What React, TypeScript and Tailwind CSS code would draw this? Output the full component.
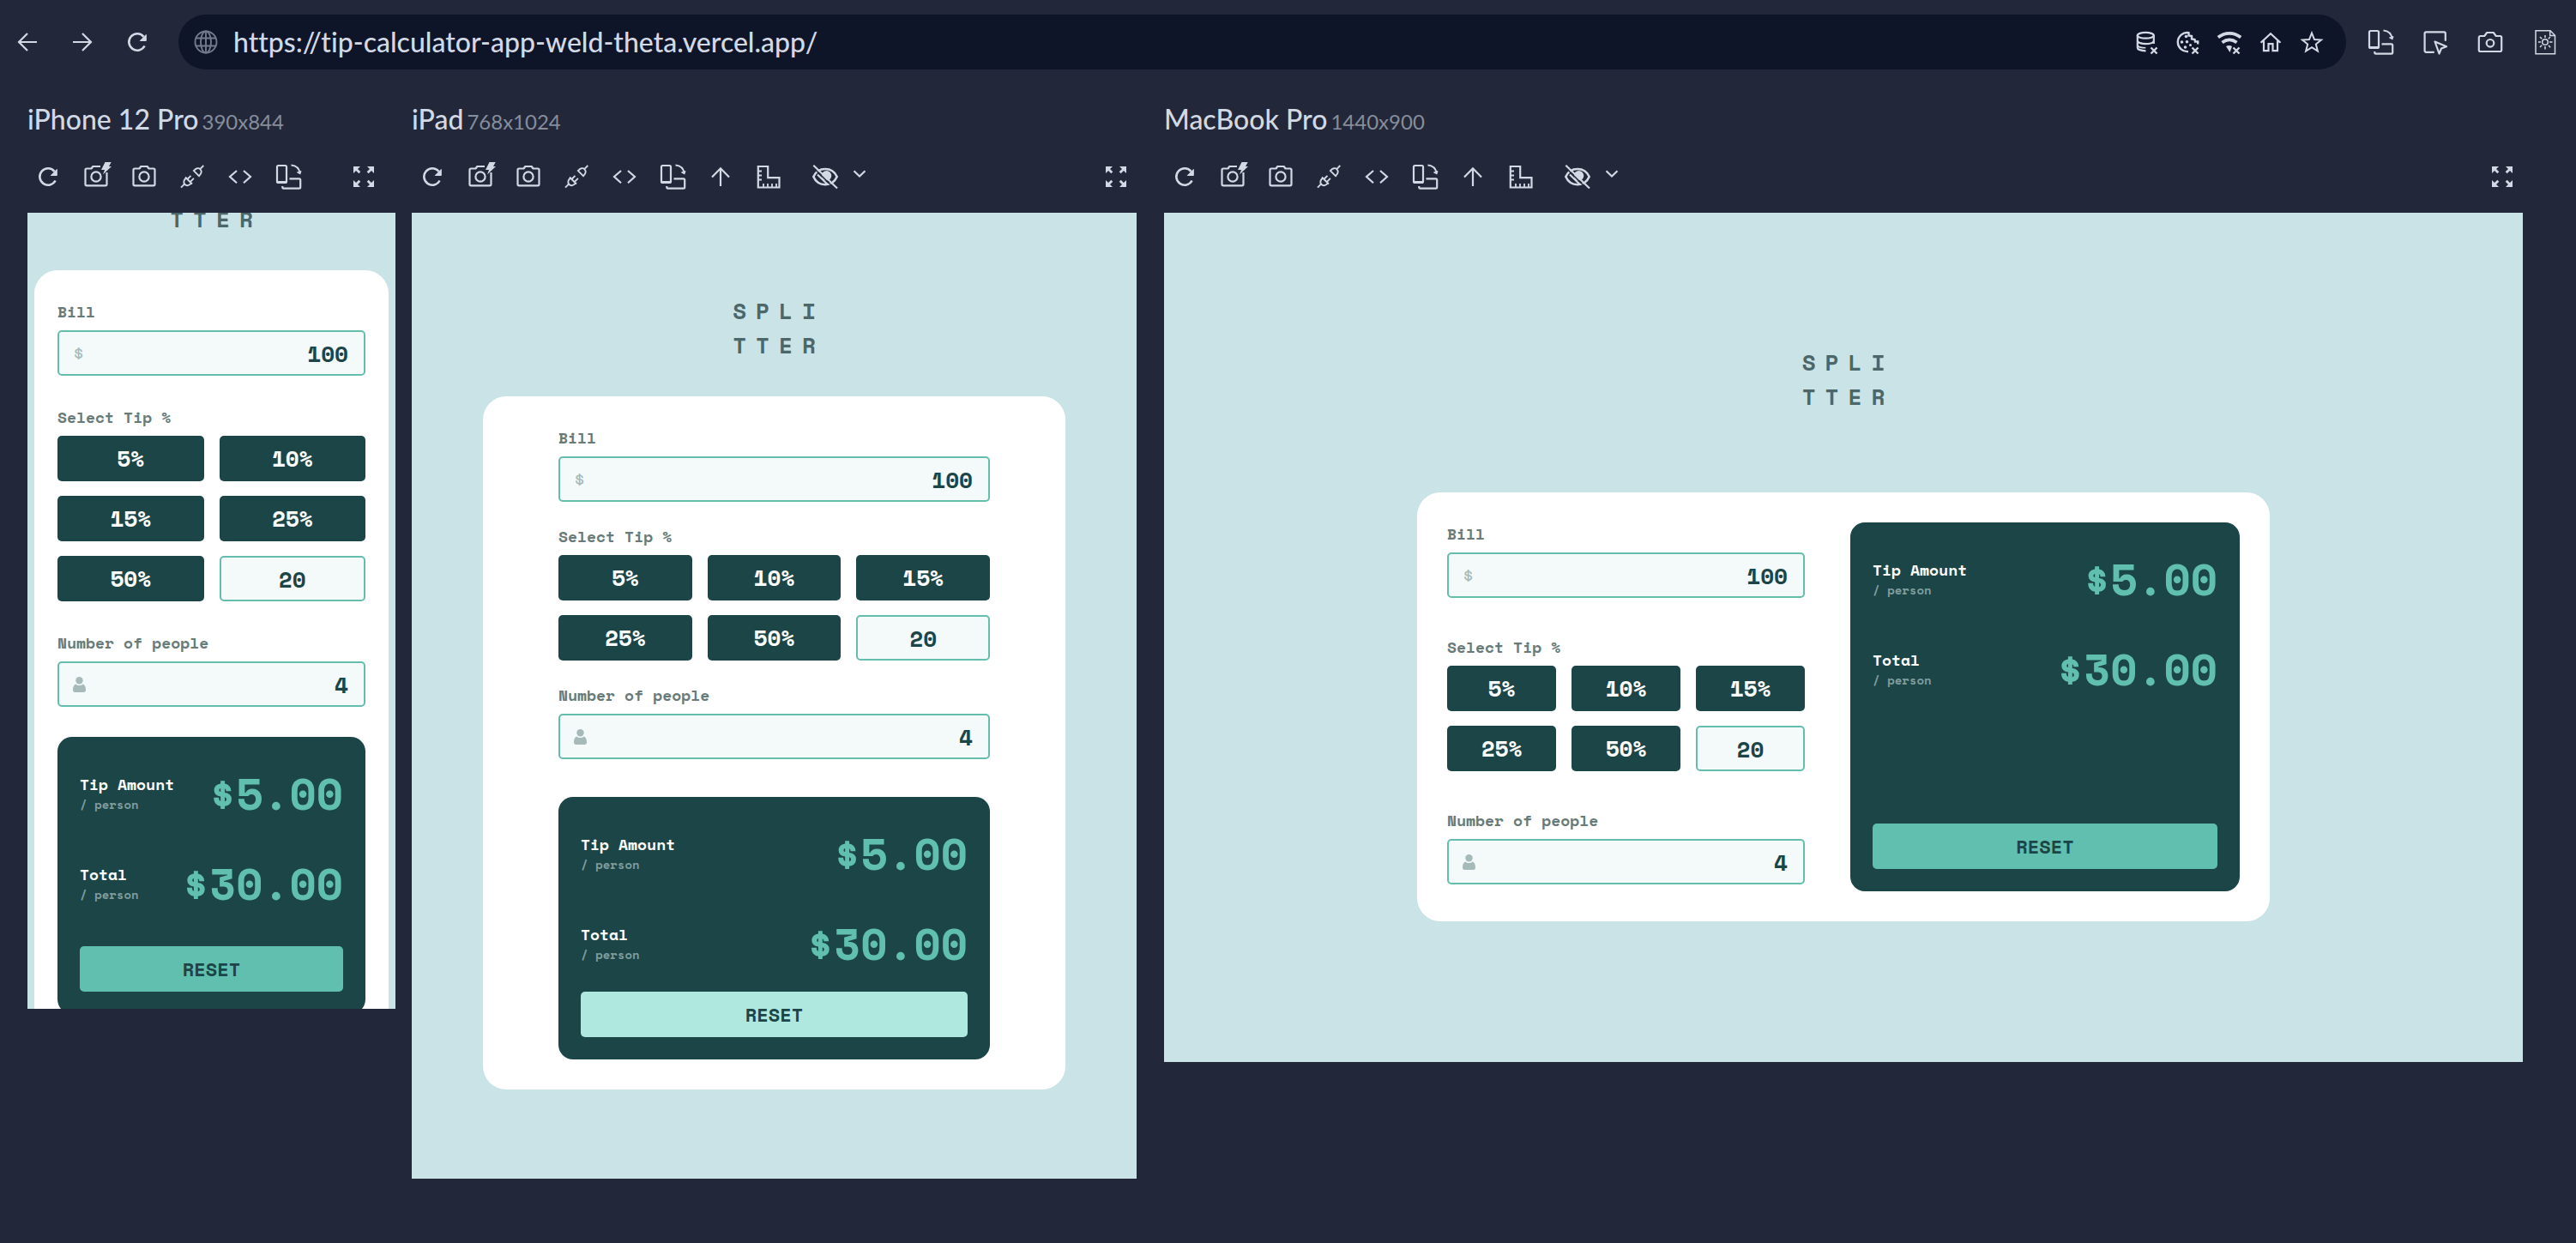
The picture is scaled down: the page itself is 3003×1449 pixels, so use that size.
import { useId, type ReactNode } from "react";

type Layout = "phone" | "tablet" | "laptop";

function Icon({ children, className = "" }: { children: ReactNode; className?: string }) {
  return (
    <svg
      aria-hidden="true"
      viewBox="0 0 32 32"
      fill="none"
      stroke="currentColor"
      strokeWidth="2.2"
      className={`size-8 shrink-0 overflow-visible ${className}`}
    >
      {children}
    </svg>
  );
}

const SmallCross = () => <path strokeWidth="2.4" d="M20.5 22.5l7 7M27.5 22.5l-7 7" />;

const icons = {
  back: <path d="M27 16H6.5M16 6L6 16l10 10" />,
  forward: <path d="M5 16h20.5M16 6l10 10-10 10" />,
  reload: (
    <>
      <path strokeWidth="2.6" d="M24.6 20.5A9.7 9.7 0 1 1 23.5 9.8" />
      <path fill="currentColor" strokeWidth="1" strokeLinejoin="round" d="M26.3 7.5v7h-7z" />
    </>
  ),
  camera: (
    <>
      <path
        strokeLinejoin="round"
        d="M5 6.500h5.500L12.300 4h7.400l1.800 2.500H27A1.500 1.500 0 0 1 28.500 8v16.800A1.500 1.500 0 0 1 27 26.300H5a1.500 1.500 0 0 1-1.500-1.500V8A1.500 1.500 0 0 1 5 6.500z"
      />
      <circle cx="16" cy="16" r="5.6" />
    </>
  ),
  cameraFlash: (
    <>
      <path
        strokeLinejoin="round"
        d="M21 4h-8.700l-1.800 2.500H5A1.500 1.500 0 0 0 3.500 8v16.800A1.500 1.500 0 0 0 5 26.300h22a1.500 1.500 0 0 0 1.500-1.500V11"
      />
      <circle cx="16" cy="16" r="5.6" />
      <path fill="currentColor" stroke="none" d="M26.500-1h7.200L31 4h3L24 13.500 26 8h-4z" />
    </>
  ),
  plug: (
    <g strokeWidth="1.9">
      <path d="M3 28.700l4-4M8 16.500l8 8M9 17.500c-3 2.500-3.500 5.500-1.500 7.500s5 1.500 7.500-1.500M10.800 18.500l3.700-3.700M14.200 21.600l3.700-3.700" />
      <path d="M29.300 3l-3.800 3.800M17.200 8.300l7.500 7.500M18 9c2.500-3 5.500-3.700 7.500-1.700s1.500 5-1.300 7.600" />
    </g>
  ),
  code: <path d="M12 9l-8 7 8 7.300M20 9l8 7-8 7.300" />,
  rotate: (
    <>
      <rect x="3" y="3" width="11" height="20" rx="1.5" />
      <path strokeWidth="3" d="M3.500 22.500h10" />
      <path d="M17.500 18.300h11.300a1.400 1.400 0 0 1 1.400 1.400v8.600a1.400 1.400 0 0 1-1.400 1.400H10.500A1.400 1.400 0 0 1 9.300 28.500V27" />
      <path strokeWidth="1.8" d="M19.500 2.500C25 3 28.800 6.500 29.600 12M26.500 10.500l3.200 1.800 1-3" />
    </>
  ),
  expand: (
    <>
      <path fill="currentColor" stroke="none" d="M4 4h8L4 12zM28 4v8l-8-8zM4 28v-8l8 8zM28 28h-8l8-8z" />
      <path strokeWidth="2.8" d="M6 6l5.300 5.300M26 6l-5.300 5.300M6 26l5.300-5.300M26 26l-5.300-5.300" />
    </>
  ),
  up: <path d="M16 27V6.500M6 16.500L16 6.300l10 10.200" />,
  ruler: (
    <>
      <path d="M3.800 4h11.400v13.200h13.300v11.300H3.800z" />
      <path d="M4 9.500h4M4 14.500h4M4 19.500h4M10 28v-4M15 28v-4M20 28v-4M25 28v-4" strokeWidth="1.8" />
    </>
  ),
  eyeOff: (
    <>
      <path strokeWidth="2.6" d="M2.300 16C5 10 10 7 16 7s11 3 13.700 9C27 22 22 25.200 16 25.200S5 22 2.300 16z" />
      <circle cx="17.5" cy="14.8" r="5.800" fill="currentColor" stroke="none" />
      <path stroke="#222839" strokeWidth="1.6" d="M6 9.300l18.500 18.200" />
      <path strokeWidth="2.2" d="M7 13.500l11.500 11.300" />
      <path d="M2.300 2.700L30 29.500" />
    </>
  ),
  database: (
    <>
      <ellipse cx="14.3" cy="8.3" rx="9.5" ry="3.4" />
      <path d="M4.800 8.300V22.500c0 2 4 3.700 9.700 3.800M23.800 8.300V18M4.800 15c1 2 5 3.200 9.500 3.200s8.500-1.200 9.500-3.200" />
      <path d="M4.800 14.500c1 2 5 3.200 9.500 3.200M4.800 20c1 1.800 4 2.800 9.500 2.800" strokeWidth="1.6" />
      <SmallCross />
    </>
  ),
  cookie: (
    <>
      <path strokeWidth="2.4" d="M16 27A11 11 0 1 1 16.500 5.200v3.300l3.500.5v3.500l3.500.5.500 2.500h3.200v3" />
      <g fill="currentColor" stroke="none">
        <circle cx="13.5" cy="9.5" r="1.8" />
        <circle cx="8.5" cy="16" r="1.8" />
        <circle cx="14.5" cy="15.8" r="1.8" />
        <circle cx="12.5" cy="22" r="1.8" />
        <circle cx="18.5" cy="19.5" r="1.5" />
      </g>
      <SmallCross />
    </>
  ),
  wifi: (
    <>
      <path strokeWidth="3.8" d="M2.800 10.500c8-6.300 18.400-6.300 26.400 0M7.500 16.500c5.500-4 11.500-4 17 0" />
      <path fill="currentColor" stroke="none" d="M12 21c2-1.300 5-1.300 7 0l-2.500 7z" />
      <SmallCross />
    </>
  ),
  home: <path d="M6.500 15.500H8v10.700h5.500v-8h5v8H24V15.500h1.500M4.500 16.800L16 6.200l11.500 10.600" />,
  star: (
    <path d="M16 5.500l3 7.500 8 .5-6.200 5.100 2.100 7.900-6.900-4.400-6.900 4.400 2.100-7.900L5 13.500l8-.5z" strokeWidth="2" />
  ),
  inspect: (
    <>
      <path strokeLinecap="round" d="M14 27.800H5.300A1.700 1.700 0 0 1 3.600 26V6a1.700 1.700 0 0 1 1.700-1.700h20.800A1.700 1.700 0 0 1 27.800 6v8" />
      <path strokeLinejoin="round" d="M15.500 15.500L29 21.200l-6 2.300-2.500 6z" />
    </>
  ),
  snapshot: (
    <>
      <path
        strokeLinejoin="round"
        d="M4.500 9h4.700l3-4h7.600l3 4h4.700A1.700 1.700 0 0 1 29.200 10.700v14.600a1.700 1.700 0 0 1-1.700 1.700h-23a1.700 1.700 0 0 1-1.700-1.700V10.700A1.700 1.700 0 0 1 4.500 9z"
      />
      <circle cx="16" cy="17.3" r="4.3" />
    </>
  ),
  fileSun: (
    <g strokeWidth="1.5">
      <path d="M5 2.800h17l5.500 5.500v21.400H5zM21.700 3v5.500h5.500" />
      <circle cx="16" cy="16" r="3.3" />
      <path d="M16 8v3M16 21v3.500M8 16h3M21 16h3.500M10 10l2.200 2.200M20 20l2.200 2.200M22 10l-2.200 2.200M10 22l2.200-2.200" />
    </g>
  ),
  globe: (
    <g strokeWidth="1.9">
      <circle cx="16" cy="16" r="12.5" />
      <ellipse cx="16" cy="16" rx="6" ry="12.5" />
      <path d="M16 3.500v25M5 11.500h22M5 20.500h22" />
    </g>
  ),
};

type IconName = keyof typeof icons;

function IconButton({ icon, label }: { icon: IconName; label: string }) {
  return (
    <button type="button" aria-label={label} className="flex size-12 shrink-0 items-center justify-center">
      <Icon>{icons[icon]}</Icon>
    </button>
  );
}

function AddressBar() {
  return (
    <header className="flex items-center gap-4 pt-[17px] pr-3 pl-2">
      <IconButton icon="back" label="Back" />
      <IconButton icon="forward" label="Forward" />
      <IconButton icon="reload" label="Reload" />
      <div className="ml-2 flex h-16 min-w-0 flex-1 items-center rounded-full bg-[#0f1528] px-4">
        <Icon className="text-[#737a8b]">{icons.globe}</Icon>
        <input
          type="text"
          aria-label="Address"
          defaultValue="https://tip-calculator-app-weld-theta.vercel.app/"
          className="ml-4 min-w-0 flex-1 bg-transparent text-[32px] leading-10 outline-none"
        />
        <IconButton icon="database" label="Clear storage" />
        <IconButton icon="cookie" label="Clear cookies" />
        <IconButton icon="wifi" label="Clear network cache" />
        <IconButton icon="home" label="Set as homepage" />
        <IconButton icon="star" label="Bookmark" />
      </div>
      <IconButton icon="rotate" label="Rotate devices" />
      <IconButton icon="inspect" label="Inspect elements" />
      <IconButton icon="snapshot" label="Capture all devices" />
      <IconButton icon="fileSun" label="Color scheme" />
    </header>
  );
}

function DeviceToolbar({ full }: { full: boolean }) {
  return (
    <div className={`mt-5 flex items-center gap-2 ${full ? "" : "pr-[13px]"}`}>
      <IconButton icon="reload" label="Reload device" />
      <IconButton icon="cameraFlash" label="Quick screenshot" />
      <IconButton icon="camera" label="Full page screenshot" />
      <IconButton icon="plug" label="Disable event mirroring" />
      <IconButton icon="code" label="Open devtools" />
      <IconButton icon="rotate" label="Rotate device" />
      {full && (
        <>
          <IconButton icon="up" label="Scroll to top" />
          <IconButton icon="ruler" label="Show rulers" />
          <div className="ml-[10px] flex items-center gap-1">
            <IconButton icon="eyeOff" label="Visual impairment" />
            <button type="button" aria-label="Visual impairment options" className="flex h-12 w-6 items-center justify-center">
              <svg viewBox="0 0 24 32" fill="none" stroke="currentColor" strokeWidth="2.2" className="h-8 w-6" aria-hidden="true">
                <path d="M5.500 9.200l6.500 6.300 6.500-6.300" />
              </svg>
            </button>
          </div>
        </>
      )}
      <div className="ml-auto">
        <IconButton icon="expand" label="Fullscreen" />
      </div>
    </div>
  );
}

const fieldClass =
  "h-[53px] w-full min-w-0 rounded-[5px] border-2 border-[#65bdae] bg-[#f4f9fa] text-[26px] font-bold text-[#1c4548] outline-none";
const labelClass = "block text-[18px] leading-[27px] font-bold text-[#687b78]";

function Field({ label, value, icon }: { label: string; value: string; icon: ReactNode }) {
  const id = useId();
  return (
    <div>
      <label htmlFor={id} className={labelClass}>
        {label}
      </label>
      <div className="relative mt-2">
        <span className="pointer-events-none absolute inset-y-0 left-[18px] flex items-center text-[#a6bab9]">{icon}</span>
        <input id={id} type="text" inputMode="numeric" defaultValue={value} className={`${fieldClass} pr-[18px] pl-12 text-right`} />
      </div>
    </div>
  );
}

function PersonIcon() {
  return (
    <svg viewBox="0 0 15 18" fill="currentColor" className="h-[18px] w-[15px]" aria-hidden="true">
      <circle cx="7.5" cy="4.3" r="4.2" />
      <path d="M3.300 8.500c2.300 2 6.100 2 8.400 0 2.400 1 3.300 3.500 3.300 7 0 1.600-1 2.500-2.400 2.500H2.400C1 18 0 17.100 0 15.500c0-3.500.9-6 3.300-7z" />
    </svg>
  );
}

function Result({ label, amount }: { label: string; amount: string }) {
  return (
    <div className="flex items-center justify-between">
      <div className="font-bold">
        <div className="text-[18px] leading-[26px] text-white">{label}</div>
        <div className="text-[14px] leading-[22px] text-[#7f9c9e]">/ person</div>
      </div>
      <output className="text-[51px] leading-[79px] font-bold text-[#60bfaf]">{amount}</output>
    </div>
  );
}

const layouts: Record<Layout, { page: string; card: string; form: string; tips: string; reset: string }> = {
  phone: {
    page: "-mt-[53px] px-2",
    card: "mt-10 grid-cols-1 gap-[35px] px-[27px] py-[35px]",
    form: "gap-[35px]",
    tips: "grid-cols-2",
    reset: "mt-[34px] bg-[#60bfaf]",
  },
  tablet: {
    page: "h-full justify-center px-[83px] pb-[10px]",
    card: "mt-10 grid-cols-1 gap-11 px-[88px] py-[35px]",
    form: "gap-[27px]",
    tips: "grid-cols-3",
    reset: "mt-[17px] bg-[#aee8df]",
  },
  laptop: {
    page: "h-full justify-center pb-[10px]",
    card: "mt-[92px] max-w-[994px] grid-cols-[417fr_454fr] gap-[53px] p-[35px]",
    form: "gap-11 pb-2",
    tips: "grid-cols-3",
    reset: "mt-auto bg-[#60bfaf]",
  },
};

function TipCalculator({ layout }: { layout: Layout }) {
  const l = layouts[layout];
  return (
    <main className={`flex flex-col items-center [font-family:'Space_Mono','DejaVu_Sans_Mono',monospace] ${l.page}`}>
      <h1 className="pl-[11px] text-[26px] leading-10 font-bold tracking-[11px] text-[#4b676a]">
        SPLI
        <br />
        TTER
      </h1>
      <div className={`grid w-full rounded-[27px] bg-white ${l.card}`}>
        <form className={`flex min-w-0 flex-col ${l.form}`}>
          <Field label="Bill" value="100" icon={<span className="text-[22px]">$</span>} />
          <fieldset className="min-w-0">
            <legend className={labelClass}>Select Tip %</legend>
            <div className={`mt-2 grid gap-x-[18px] gap-y-[17px] ${l.tips}`}>
              {["5%", "10%", "15%", "25%", "50%"].map((tip) => (
                <button key={tip} type="button" className="h-[53px] rounded-[5px] bg-[#1c4548] text-[26px] font-bold text-white">
                  {tip}
                </button>
              ))}
              <input type="text" inputMode="numeric" aria-label="Custom tip" defaultValue="20" className={`${fieldClass} text-center`} />
            </div>
          </fieldset>
          <Field label="Number of people" value="4" icon={<PersonIcon />} />
        </form>
        <section aria-label="Result" className="flex min-w-0 flex-col rounded-[17px] bg-[#1c4548] p-[26px]">
          <div className="flex flex-col gap-[26px]">
            <Result label="Tip Amount" amount="$5.00" />
            <Result label="Total" amount="$30.00" />
          </div>
          <button type="button" className={`h-[53px] w-full shrink-0 rounded-[5px] text-[22px] font-bold text-[#1c4548] ${l.reset}`}>
            RESET
          </button>
        </section>
      </div>
    </main>
  );
}

function Device({ name, size, layout, column, frame }: { name: string; size: string; layout: Layout; column: string; frame: string }) {
  return (
    <section aria-label={name} className={`min-w-0 ${column}`}>
      <div className="flex items-baseline gap-1 leading-10 whitespace-nowrap">
        <h2 className="text-[32px] leading-10">{name}</h2>
        <span className="text-[24px] font-normal text-[#868d9c]">{size}</span>
      </div>
      <DeviceToolbar full={layout !== "phone"} />
      <div className={`mt-[18px] overflow-hidden bg-[#cae3e6] ${frame}`}>
        <TipCalculator layout={layout} />
      </div>
    </section>
  );
}

export default function App() {
  return (
    <div className="min-h-screen bg-[#222839] font-medium text-[#d3d9e4] [font-family:Lato,sans-serif] [font-variant-ligatures:none]">
      <AddressBar />
      <div className="flex items-start gap-8 pt-[38px] pr-[62px] pl-8">
        <Device name="iPhone 12 Pro" size="390x844" layout="phone" column="-mr-[13px] flex-[429]" frame="aspect-[429/928]" />
        <Device name="iPad" size="768x1024" layout="tablet" column="flex-[845]" frame="aspect-[845/1126]" />
        <Device name="MacBook Pro" size="1440x900" layout="laptop" column="flex-[1584]" frame="aspect-[1584/990]" />
      </div>
    </div>
  );
}
